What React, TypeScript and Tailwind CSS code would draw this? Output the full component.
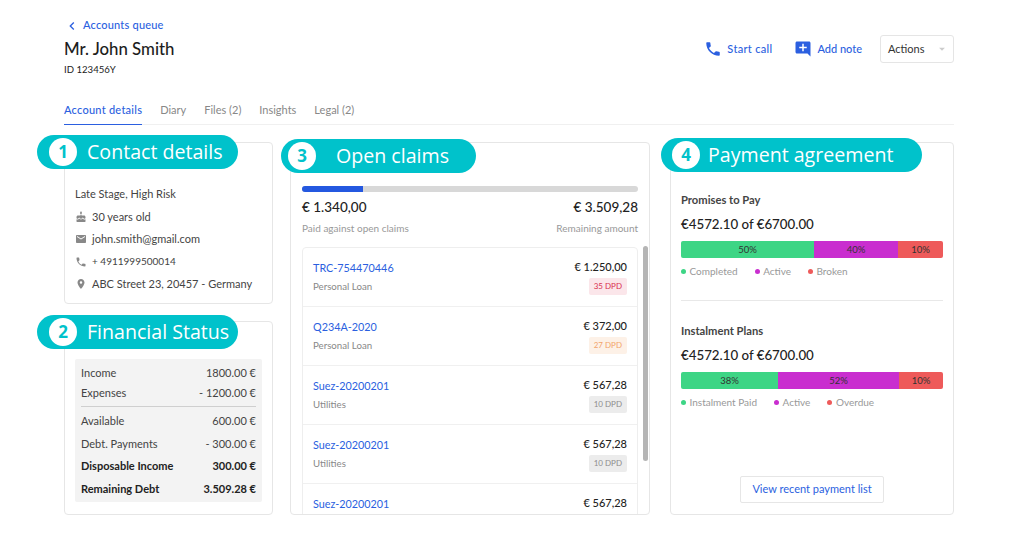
import { MdAddComment, MdArrowDropDown, MdCake, MdChevronLeft, MdEmail, MdLocationOn, MdPhone } from "react-icons/md";

const tabs = ["Diary", "Files (2)", "Insights", "Legal (2)"];

const contact = [
  { icon: MdCake, text: "30 years old", size: "text-[11px]" },
  { icon: MdEmail, text: "john.smith@gmail.com", size: "text-[11px]" },
  { icon: MdPhone, text: "+ 4911999500014", size: "text-[10px]" },
  { icon: MdLocationOn, text: "ABC Street 23, 20457 - Germany", size: "text-[11px]" },
];

const claims = [
  { id: "TRC-754470446", type: "Personal Loan", amount: "€ 1.250,00", dpd: "35 DPD", badge: "bg-[#fbe6ea] text-[#d9304f]" },
  { id: "Q234A-2020", type: "Personal Loan", amount: "€ 372,00", dpd: "27 DPD", badge: "bg-[#fdf1e7] text-[#f2a56b]" },
  { id: "Suez-20200201", type: "Utilities", amount: "€ 567,28", dpd: "10 DPD", badge: "bg-[#ececec] text-[#8c8c8c]" },
  { id: "Suez-20200201", type: "Utilities", amount: "€ 567,28", dpd: "10 DPD", badge: "bg-[#ececec] text-[#8c8c8c]" },
  { id: "Suez-20200201", amount: "€ 567,28" },
];

function Callout({ n, title, className }: { n: number; title: string; className: string }) {
  return (
    <div className={`absolute flex h-[34px] items-center rounded-full bg-[#00c2cb] font-['Open_Sans',sans-serif] text-[19.6px] text-white ${className}`}>
      <span className="flex h-[28px] w-[28px] shrink-0 items-center justify-center rounded-full bg-white text-[17px] font-bold text-[#00c2cb]">{n}</span>
      <span className="whitespace-nowrap">{title}</span>
    </div>
  );
}

function Money({ label, value, bold }: { label: string; value: string; bold?: boolean }) {
  return (
    <div className={`flex h-[22.5px] items-center justify-between ${bold ? "font-bold text-[#222]" : "text-[#444]"}`}>
      <span>{label}</span>
      <span>{value}</span>
    </div>
  );
}

function Agreement({ title, parts, legend }: {
  title: string;
  parts: { pct: string; cls: string }[];
  legend: { label: string; dot: string }[];
}) {
  return (
    <div>
      <div className="text-[11.2px] font-bold leading-[14px] text-[#444]">{title}</div>
      <div className="mt-[8px] text-[13.3px] font-medium leading-[18px] text-[#222]">€4572.10 of €6700.00</div>
      <div className="mt-[8px] flex h-[17px] overflow-hidden rounded-[2px] text-center text-[9.5px] leading-[17px] text-[#333]">
        {parts.map((p) => (
          <div key={p.pct + p.cls} className={p.cls}>{p.pct}</div>
        ))}
      </div>
      <div className="mt-[6px] flex gap-[17px] text-[10px] leading-[14px] text-[#999]">
        {legend.map((l) => (
          <span key={l.label} className="flex items-center gap-[3.5px]">
            <span className={`h-[5px] w-[5px] rounded-full ${l.dot}`} />
            {l.label}
          </span>
        ))}
      </div>
    </div>
  );
}

export default function App() {
  return (
    <div className="relative h-[535px] w-[1024px] overflow-hidden bg-white pl-[64px] pr-[70px] font-['Lato',sans-serif] text-[#333]">
      <div className="flex h-[102px] items-start justify-between pt-[18px]">
        <div>
          <div className="flex h-[15px] items-center gap-[3px] text-[11px] font-medium tracking-[0.2px] text-[#2b5fe0]">
            <MdChevronLeft className="text-[16px]" />
            Accounts queue
          </div>
          <div className="mt-[6px] text-[16.8px] font-medium leading-[20px] text-[#1d1d1d]">Mr. John Smith</div>
          <div className="mt-[4px] text-[9.6px] leading-[14px] text-[#222]">ID 123456Y</div>
        </div>
        <div className="mt-[17px] flex items-center text-[11px] font-medium text-[#2b5fe0]">
          <MdPhone className="text-[18px]" />
          <span className="ml-[5px] tracking-[0.3px]">Start call</span>
          <MdAddComment className="ml-[22px] text-[18px]" />
          <span className="ml-[5px]">Add note</span>
          <div className="ml-[18px] flex h-[28px] w-[74px] items-center justify-between rounded-[3px] border border-[#e5e5e5] pl-[7px] pr-[4px] text-[11px] font-normal text-[#333]">
            Actions
            <MdArrowDropDown className="text-[14px] text-[#ccc]" />
          </div>
        </div>
      </div>

      <div className="flex h-[23px] items-start gap-[18px] border-b border-[#f0f0f0] text-[11px] text-[#888]">
        <div className="h-[23px] border-b-[1.5px] border-[#2b5fe0] font-medium tracking-[0.25px] text-[#2b5fe0]">Account details</div>
        {tabs.map((t) => (
          <div key={t}>{t}</div>
        ))}
      </div>

      <div className="mt-[17px] flex h-[373px] text-[11px]">
        <div className="flex w-[209px] shrink-0 flex-col gap-[17px]">
          <div className="h-[162px] rounded-[4px] border border-[#e6e6e6] px-[10px] pt-[40px] text-[#444]">
            <div className="flex h-[22.5px] items-center">Late Stage, High Risk</div>
            {contact.map((c) => {
              const Icon = c.icon;
              return (
                <div key={c.text} className="flex h-[22.5px] items-center gap-[5px]">
                  <Icon className="shrink-0 text-[12px] text-[#888]" />
                  <span className={`whitespace-nowrap ${c.size}`}>{c.text}</span>
                </div>
              );
            })}
          </div>
          <div className="h-[194px] rounded-[4px] border border-[#e6e6e6] px-[10px] pt-[37px]">
            <div className="rounded-[2px] bg-[#f3f3f3] px-[6px] pb-[2px] pt-[4px]">
              <div className="border-b border-[#cfcfcf] pb-[3px] text-[#444]">
                <div className="flex h-[20px] items-center justify-between"><span>Income</span><span>1800.00 €</span></div>
                <div className="flex h-[20px] items-center justify-between"><span>Expenses</span><span>- 1200.00 €</span></div>
              </div>
              <div className="pt-[3px]">
                <Money label="Available" value="600.00 €" />
                <Money label="Debt. Payments" value="- 300.00 €" />
                <Money label="Disposable Income" value="300.00 €" bold />
                <Money label="Remaining Debt" value="3.509.28 €" bold />
              </div>
            </div>
          </div>
        </div>

        <div className="relative ml-[17px] w-[360px] shrink-0 overflow-hidden rounded-[4px] border border-[#e6e6e6] px-[11px] pt-[43px]">
          <div className="h-[6px] w-[336px] overflow-hidden rounded-full bg-[#d8d8d8]">
            <div className="h-full w-[61px] bg-[#2458e0]" />
          </div>
          <div className="flex w-[336px] justify-between pt-[5px] text-[13.5px] font-medium leading-[20px] text-[#222]">
            <span>€ 1.340,00</span>
            <span>€ 3.509,28</span>
          </div>
          <div className="mt-[4px] flex w-[336px] justify-between text-[10px] leading-[14px] text-[#999]">
            <span>Paid against open claims</span>
            <span>Remaining amount</span>
          </div>
          <div className="mt-[12px] w-[336px] rounded-[4px] border border-[#eeeeee]">
            {claims.map((c, i) => (
              <div key={i} className="flex h-[59px] justify-between border-b border-[#f0f0f0] px-[10px] pt-[11px]">
                <div>
                  <div className="pt-px text-[10.8px] leading-[16px] text-[#2b5fe0]">{c.id}</div>
                  {c.type && <div className="mt-[3px] text-[9.7px] leading-[14px] text-[#888]">{c.type}</div>}
                </div>
                <div className="flex flex-col items-end">
                  <div className="text-[11px] font-medium leading-[15px] text-[#222]">{c.amount}</div>
                  {c.dpd && <div className={`mt-[4px] rounded-[2px] px-[5px] text-[8px] leading-[17px] ${c.badge}`}>{c.dpd}</div>}
                </div>
              </div>
            ))}
          </div>
          <div className="absolute left-[352px] top-[103px] h-[215px] w-[5px] rounded-full bg-[#b5b5b5]" />
        </div>

        <div className="ml-[20px] flex w-[284px] shrink-0 flex-col rounded-[4px] border border-[#e6e6e6] px-[10px] pt-[50px]">
          <Agreement
            title="Promises to Pay"
            parts={[
              { pct: "50%", cls: "w-[133px] bg-[#3dd585]" },
              { pct: "40%", cls: "w-[84px] bg-[#c92ecf]" },
              { pct: "10%", cls: "flex-1 bg-[#ee5a5a]" },
            ]}
            legend={[
              { label: "Completed", dot: "bg-[#3dd585]" },
              { label: "Active", dot: "bg-[#c92ecf]" },
              { label: "Broken", dot: "bg-[#ee5a5a]" },
            ]}
          />
          <div className="mt-[22px] h-px bg-[#e8e8e8]" />
          <div className="mt-[23px]">
            <Agreement
              title="Instalment Plans"
              parts={[
                { pct: "38%", cls: "w-[97px] bg-[#3dd585]" },
                { pct: "52%", cls: "w-[121px] bg-[#c92ecf]" },
                { pct: "10%", cls: "flex-1 bg-[#ee5a5a]" },
              ]}
              legend={[
                { label: "Instalment Paid", dot: "bg-[#3dd585]" },
                { label: "Active", dot: "bg-[#c92ecf]" },
                { label: "Overdue", dot: "bg-[#ee5a5a]" },
              ]}
            />
          </div>
          <div className="mt-auto mb-[11px] flex h-[27px] w-[144px] items-center justify-center self-center rounded-[2px] border border-[#e6e6e6] text-[11px] text-[#2b5fe0]">
            View recent payment list
          </div>
        </div>
      </div>

      <Callout n={1} title="Contact details" className="left-[37px] top-[135px] w-[201px] gap-[10px] pl-[12px]" />
      <Callout n={2} title="Financial Status" className="left-[37px] top-[315px] w-[201px] gap-[10px] pl-[12px]" />
      <Callout n={3} title="Open claims" className="left-[281px] top-[139px] w-[195px] gap-[20px] pl-[7px]" />
      <Callout n={4} title="Payment agreement" className="left-[661px] top-[138px] w-[261px] gap-[8px] pl-[11px]" />
    </div>
  );
}
